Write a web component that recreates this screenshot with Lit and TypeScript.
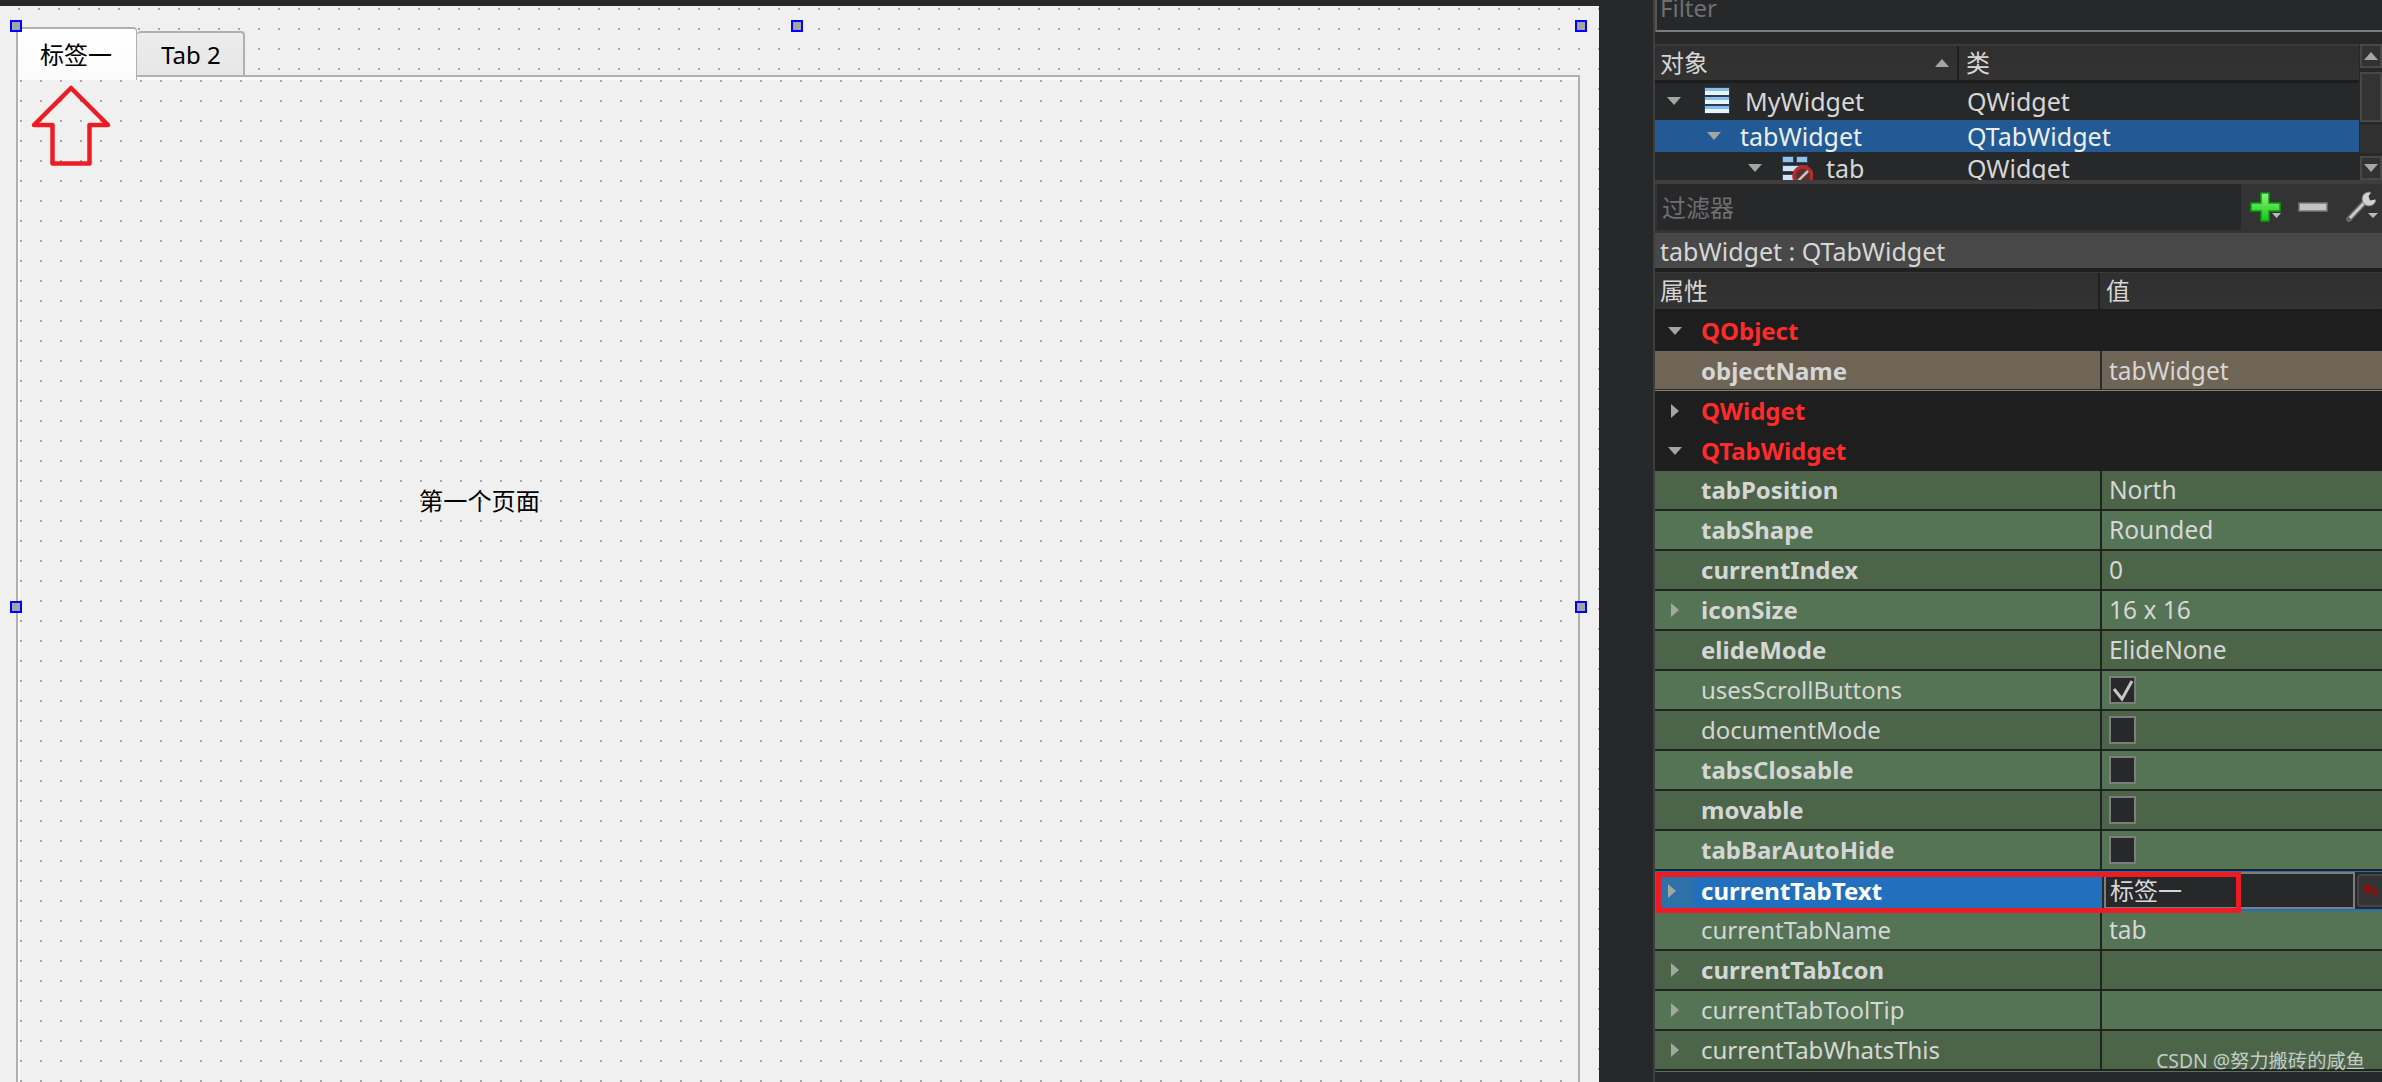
import { LitElement, html, css, svg } from "lit";
import { customElement } from "lit/decorators.js";

type Row = { n: string; v?: string; bold?: boolean; tone: "d" | "l"; arrow?: boolean; check?: boolean | "on" };

const rows: Row[] = [
  { n: "tabPosition", v: "North", bold: true, tone: "d" },
  { n: "tabShape", v: "Rounded", bold: true, tone: "l" },
  { n: "currentIndex", v: "0", bold: true, tone: "d" },
  { n: "iconSize", v: "16 x 16", bold: true, tone: "l", arrow: true },
  { n: "elideMode", v: "ElideNone", bold: true, tone: "d" },
  { n: "usesScrollButtons", tone: "l", check: "on" },
  { n: "documentMode", tone: "d", check: true },
  { n: "tabsClosable", bold: true, tone: "l", check: true },
  { n: "movable", bold: true, tone: "d", check: true },
  { n: "tabBarAutoHide", bold: true, tone: "l", check: true },
];
const rowsAfter: Row[] = [
  { n: "currentTabName", v: "tab", tone: "l" },
  { n: "currentTabIcon", bold: true, tone: "d", arrow: true },
  { n: "currentTabToolTip", tone: "l", arrow: true },
  { n: "currentTabWhatsThis", tone: "d", arrow: true },
];

const tri = (dir: "down" | "right" | "up", cls = "") => {
  const pts = dir === "down" ? "0,0 14,0 7,8" : dir === "up" ? "0,8 14,8 7,0" : "0,0 8,7 0,14";
  const w = dir === "right" ? 8 : 14;
  const h = dir === "right" ? 14 : 8;
  return html`<svg class="tri ${cls}" width=${w} height=${h} viewBox="0 0 ${w} ${h}"><polygon points=${pts} fill="#a0a8a0"></polygon></svg>`;
};

const layoutIcon = html`<svg class="ticon" width="26" height="27" viewBox="0 0 26 27">
  ${[0, 9, 18].map(
    (y) => svg`<rect x="0.5" y=${y + 0.5} width="25" height="8" fill="#eaf4fc" stroke="#2b3c50"></rect>
      <rect x="1" y=${y + 1} width="24" height="3" fill="#86bfee"></rect>`
  )}
</svg>`;

const tabIcon = html`<svg class="ticon" width="32" height="27" viewBox="0 0 32 27">
  <rect x="1.5" y="1.5" width="11" height="6" fill="#8fc3ee" stroke="#3a4a5c"></rect>
  <rect x="15.5" y="1.5" width="11" height="6" fill="#8fc3ee" stroke="#3a4a5c"></rect>
  <rect x="1.5" y="10.5" width="25" height="6" fill="#cfe5f6" stroke="#3a4a5c"></rect>
  <rect x="1.5" y="19.5" width="14" height="6" fill="#cfe5f6" stroke="#3a4a5c"></rect>
  <circle cx="22" cy="21" r="9" fill="#5a3030" stroke="#b92a2a" stroke-width="3.5"></circle>
  <line x1="17" y1="26" x2="27" y2="16" stroke="#c9c4c4" stroke-width="2.5"></line>
</svg>`;

const plusIcon = html`<svg width="32" height="30" viewBox="0 0 32 30">
  <defs><linearGradient id="pg" x1="0" y1="0" x2="0" y2="1"><stop offset="0" stop-color="#8ff27a"></stop><stop offset="1" stop-color="#10c818"></stop></linearGradient></defs>
  <path d="M11 1h8v10h11v8H19v10h-8V19H1v-8h10z" fill="url(#pg)" stroke="#0a9a12" stroke-width="1.5"></path>
  <polygon points="22,21 31,21 26.5,26" fill="#b8b8b8"></polygon>
</svg>`;
const minusIcon = html`<svg width="30" height="10" viewBox="0 0 30 10"><rect x="1" y="1" width="28" height="8" fill="#c4c4c4" stroke="#777" stroke-width="1.5"></rect></svg>`;
const wrenchIcon = html`<svg width="34" height="32" viewBox="0 0 34 32">
  <path d="M4 28 L20 11" stroke="#5f5f5f" stroke-width="6" stroke-linecap="round"></path>
  <path d="M4 28 L20 11" stroke="#c8c8c8" stroke-width="3" stroke-linecap="round"></path>
  <circle cx="4" cy="28" r="1.5" fill="#555"></circle>
  <circle cx="24" cy="8" r="7" fill="#d2d2d2" stroke="#777"></circle>
  <path d="M33 8 L25 9.5 L23.5 5 L28 -1 L34 -1 Z" fill="#333"></path>
  <polygon points="23,22 33,22 28,27" fill="#b8b8b8"></polygon>
</svg>`;
const checkMark = html`<svg width="23" height="24" viewBox="0 0 23 24"><path d="M3 11 L11 21 L21 3" fill="none" stroke="#c4c4c4" stroke-width="3"></path></svg>`;
const undoIcon = html`<svg width="20" height="18" viewBox="0 0 20 18"><path d="M8 1 L1 7 L8 13 V9 C12 9 14 11 14 17 C18 12 17 5 8 5 Z" fill="#8a0f0f"></path></svg>`;

@customElement("app-root")
export class AppRoot extends LitElement {
  static styles = css`
    :host { display: block; width: 2382px; height: 1082px; overflow: hidden; background: #27282a;
      font-family: "Noto Sans", "Noto Sans CJK SC", sans-serif; font-size: 24px; }
    * { box-sizing: border-box; }
    .app { display: flex; height: 1082px; }
    .designer { width: 1599px; margin-top: 6px; background-color: #f0f0f0; position: relative; overflow: hidden;
      background-image: conic-gradient(at 2px 2px, transparent 75%, #a6a6a6 0); background-size: 20px 20px; background-position: 18px 2px;
      color: #000; }
    .tabbar { display: flex; align-items: flex-end; height: 48px; margin-top: 21px; padding-left: 16px; }
    .tab { display: flex; align-items: center; justify-content: center; border: 2px solid #b0b0b0; border-bottom: none; border-radius: 4px 4px 0 0; }
    .tab.on { width: 121px; height: 53px; margin-bottom: -5px; background: linear-gradient(#fff, #fbfbfb); position: relative; z-index: 2; border-right-width: 1px; padding: 0 2px 2px 0; }
    .tab.off { width: 108px; height: 44px; background: linear-gradient(#ededed, #e6e6e6); border-left: none; padding-left: 2px; }
    .pane { margin-left: 16px; width: 1564px; height: 1010px; background: #fafafa; border: 2px solid #b0b0b0; padding: 3px 0 0 2px; }
    .page { height: 100%; background-color: #f0f0f0; background-image: conic-gradient(at 2px 2px, transparent 75%, #a6a6a6 0); background-size: 20px 20px; background-position: 0 0; position: relative; }
    .page .lbl { position: absolute; left: 399px; top: 405px; line-height: 32px; white-space: nowrap; font-size: 24.2px; }
    .handle { position: absolute; width: 12px; height: 12px; background: #a4a4a4; border: 2px solid #0000ff; z-index: 3; }
    .arrow { position: absolute; left: 28px; top: 76px; z-index: 4; }

    .gutter { width: 54px; }
    .panel { flex: 1; min-width: 0; border-left: 2px solid #3e3e3e; color: #d6d6d6; position: relative; }
    .filter { height: 32px; border-bottom: 2px solid #7c7c7c; border-left: 2px solid #555; padding-left: 3px; display: flex; align-items: flex-end; color: #6f6f6f; line-height: 30px; overflow: hidden; }
    .filter span { display: block; height: 30px; margin-bottom: 7px; }
    .treewrap { display: flex; margin-top: 12px; height: 136px; }
    .tree { flex: 1; min-width: 0; overflow: hidden; }
    .thead { display: grid; grid-template-columns: 304px 1fr; height: 39px; border-top: 2px solid #3a3a3a; border-bottom: 3px solid #1c1c1c; background: linear-gradient(#2f2f2f, #333); }
    .thead div { display: flex; align-items: center; padding-left: 5px; line-height: 32px; }
    .thead div:first-child { border-right: 2px solid #1f1f1f; justify-content: space-between; padding-right: 8px; }
    .thead div:last-child { padding-left: 7px; }
    .trow { display: grid; grid-template-columns: 304px 1fr; align-items: center; white-space: nowrap; line-height: 32px; font-size: 25px; }
    .trow .c1 { display: flex; align-items: center; }
    .trow .c2 { padding-left: 8px; }
    .r1 { height: 37px; padding-bottom: 2px; }
    .r1 .c1 { padding-left: 12px; }
    .r1 .ticon { margin-left: 23px; margin-right: 15px; }
    .r2 { height: 32px; background: #225a95; color: #eee; }
    .r2 .c1 { padding-left: 52px; }
    .r2 .name { margin-left: 19px; }
    .r3 { height: 28px; }
    .r3 .c1 { padding-left: 93px; }
    .r3 .ticon { margin-left: 19px; margin-right: 13px; }
    .tri { flex: none; display: block; }
    .sbar { width: 22px; margin-left: 1px; display: flex; flex-direction: column; gap: 3px; }
    .sbtn { height: 24px; background: #323232; border: 2px solid #474747; display: flex; align-items: center; justify-content: center; }
    .sbtn.up { margin-bottom: 1px; }
    .shandle { height: 50px; background: #333; border: 2px solid #474747; }
    .strack { height: 28px; background: #303030; }
    .split { height: 4px; background: #3e3e3e; }
    .toolbar { display: flex; align-items: center; height: 49px; background: #333; padding-left: 2px; padding-bottom: 3px; }
    .finput { width: 584px; height: 46px; background: #27282a; color: #6f6f6f; display: flex; align-items: center; padding: 0 0 2px 5px; align-self: flex-start; }
    .tools { display: flex; align-items: center; }
    .tools svg { display: block; }
    .t1 { margin-left: 9px; }
    .t2 { margin-left: 16px; }
    .t3 { margin-left: 17px; }
    .objbar { height: 35px; background: #484848; display: flex; align-items: center; padding-left: 5px; line-height: 32px; font-size: 25px; }
    .pane2 { border-top: 4px solid #1f1f1f; }
    .phead { display: grid; grid-template-columns: 445px 1fr; height: 39px; background: linear-gradient(#2f2f2f, #333); border-top: 1px solid #3a3a3a; border-bottom: 2px solid #1c1c1c; }
    .phead div { display: flex; align-items: center; padding-left: 5px; line-height: 32px; }
    .phead div:first-child { border-right: 2px solid #1f1f1f; }
    .phead div:last-child { padding-left: 6px; }
    .prow { display: grid; grid-template-columns: 447px 1fr; height: 40px; border-bottom: 2px solid #202222; white-space: nowrap; line-height: 32px; }
    .prow .pn { display: flex; align-items: center; border-right: 2px solid #202222; padding-left: 46px; }
    .prow .pv { display: flex; align-items: center; padding-left: 7px; font-size: 24.5px; }
    .prow .exp { width: 40px; margin-left: -46px; margin-right: 6px; display: flex; justify-content: center; flex: none; }
    .prow.b .pn { font-weight: 700; }
    .d { background: #4c6549; }
    .l { background: #557355; }
    .sec { display: flex; align-items: center; height: 40px; background: #1e1e1e; color: #ff2b2b; font-weight: 700; line-height: 32px; padding-left: 46px; }
    .sec .exp { width: 40px; margin-left: -46px; margin-right: 6px; display: flex; justify-content: center; flex: none; }
    .obj { background: #6f6556; border-bottom: 1px solid #8a8173; box-shadow: inset 0 -1px 0 #2a2a2a; }
    .obj .pn, .obj .pv { border-color: #2a2a2a; }
    .chk { width: 27px; height: 28px; border: 2px solid #7e7e7e; background: #27282a; display: flex; align-items: center; justify-content: center; }
    .sel { display: grid; grid-template-columns: 447px 1fr; height: 40px; border-top: 1px solid #2270bd; border-bottom: 2px solid #2270bd; background: #27282a; }
    .sel .pn { display: flex; align-items: center; background: #2270bd; color: #fff; font-weight: 700; }
    .sel .exp { width: 39px; align-self: stretch; display: flex; align-items: center; justify-content: center; background: #2e70a8; margin-right: 7px; padding-right: 6px; }
    .sel .pv { display: flex; align-items: stretch; background: #27282a; padding-left: 2px; }
    .edit { flex: 1; border: 2px solid #7e7e7e; background: #27282a; display: flex; align-items: center; padding-left: 4px; color: #d6d6d6; line-height: 32px; }
    .reset { width: 25px; margin: 2px 0 2px 2px; background: #333; border: 2px solid #444; border-right: 0; border-radius: 4px 0 0 4px; display: flex; align-items: center; justify-content: center; overflow: hidden; }
    .lastline { height: 1px; background: #5c6e5c; }
    .redbox { position: absolute; left: 1px; top: 872px; width: 585px; height: 41px; border: 5px solid #ed1c24; z-index: 3; }
    .mark { position: absolute; right: 17px; top: 1047px; font-size: 19.3px; line-height: 28px; color: #c6cbc6; white-space: nowrap; z-index: 3; }
  `;

  private prop(r: Row) {
    return html`<div class="prow ${r.tone} ${r.bold ? "b" : ""}">
      <div class="pn">${r.arrow ? html`<span class="exp">${tri("right")}</span>` : ""}${r.n}</div>
      <div class="pv">${r.check
        ? html`<span class="chk">${r.check === "on" ? checkMark : ""}</span>`
        : r.v ?? ""}</div>
    </div>`;
  }

  private section(name: string, open: boolean) {
    return html`<div class="sec"><span class="exp">${tri(open ? "down" : "right")}</span>${name}</div>`;
  }

  render() {
    return html`<div class="app">
      <div class="designer">
        <div class="tabbar">
          <div class="tab on">标签一</div>
          <div class="tab off">Tab 2</div>
        </div>
        <div class="pane">
          <div class="page"><span class="lbl">第一个页面</span></div>
        </div>
        <span class="handle" style="left:10px;top:14px"></span>
        <span class="handle" style="left:791px;top:14px"></span>
        <span class="handle" style="left:1575px;top:14px"></span>
        <span class="handle" style="left:10px;top:595px"></span>
        <span class="handle" style="left:1575px;top:595px"></span>
        <svg class="arrow" width="84" height="86" viewBox="0 0 84 86">
          <path d="M43 6 L80 43 H61.5 V81.5 H24.5 V43 H6 Z" fill="none" stroke="#ed1c24" stroke-width="4.5" stroke-linejoin="round"></path>
        </svg>
      </div>
      <div class="gutter"></div>
      <div class="panel">
        <div class="filter"><span>Filter</span></div>
        <div class="treewrap">
          <div class="tree">
            <div class="thead"><div>对象 ${tri("up")}</div><div>类</div></div>
            <div class="trow r1"><div class="c1">${tri("down")}${layoutIcon}<span>MyWidget</span></div><div class="c2">QWidget</div></div>
            <div class="trow r2"><div class="c1">${tri("down")}<span class="name">tabWidget</span></div><div class="c2">QTabWidget</div></div>
            <div class="trow r3"><div class="c1">${tri("down")}${tabIcon}<span>tab</span></div><div class="c2">QWidget</div></div>
          </div>
          <div class="sbar">
            <div class="sbtn up">${tri("up")}</div>
            <div class="shandle"></div>
            <div class="strack"></div>
            <div class="sbtn">${tri("down")}</div>
          </div>
        </div>
        <div class="split"></div>
        <div class="toolbar">
          <div class="finput">过滤器</div>
          <div class="tools">
            <span class="t1">${plusIcon}</span><span class="t2">${minusIcon}</span><span class="t3">${wrenchIcon}</span>
          </div>
        </div>
        <div class="objbar">tabWidget : QTabWidget</div>
        <div class="pane2">
          <div class="phead"><div>属性</div><div>值</div></div>
          ${this.section("QObject", true)}
          <div class="prow obj b"><div class="pn">objectName</div><div class="pv">tabWidget</div></div>
          ${this.section("QWidget", false)}
          ${this.section("QTabWidget", true)}
          ${rows.map((r) => this.prop(r))}
          <div class="sel">
            <div class="pn"><span class="exp">${tri("right")}</span>currentTabText</div>
            <div class="pv"><div class="edit">标签一</div><div class="reset">${undoIcon}</div></div>
          </div>
          ${rowsAfter.map((r) => this.prop(r))}
          <div class="lastline"></div>
        </div>
        <div class="redbox"></div>
        <div class="mark">CSDN @努力搬砖的咸鱼</div>
      </div>
    </div>`;
  }
}
